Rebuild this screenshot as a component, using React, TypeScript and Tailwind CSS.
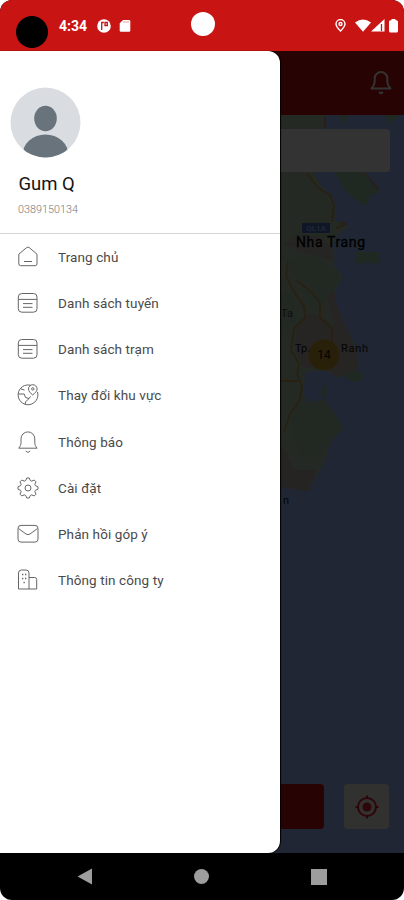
import type { ReactNode } from 'react';

// eight-tooth outline around (11, 11)
const gear = Array.from({ length: 8 }, (_, i) =>
  [[-0.3, 7.8], [-0.12, 10.1], [0.12, 10.1], [0.3, 7.8]]
    .map(([a, r]) => {
      const t = (i * Math.PI) / 4 + a;
      return `${(11 + r * Math.sin(t)).toFixed(2)},${(11 - r * Math.cos(t)).toFixed(2)}`;
    })
    .join(' '),
).join(' ');

const menu: { label: string; icon: ReactNode }[] = [
  {
    label: 'Trang chủ',
    icon: <path d="M1.8 8.2 9.500 1.700q1.400-1.100 2.800 0L20 8.2v9.6q0 1.9-1.9 1.9H3.7q-1.9 0-1.9-1.9zM7 15.500h8" />,
  },
  { label: 'Danh sách tuyến', icon: <ListShape /> },
  { label: 'Danh sách trạm', icon: <ListShape /> },
  {
    label: 'Thay đổi khu vực',
    icon: (
      <>
        <path d="M14 1.400A9.900 9.900 0 1 0 20.500 8" />
        <path d="M15.700 11c-2-1.700-4.200-3.700-4.200-6a4.200 4.200 0 0 1 8.600 0c0 2.300-2.300 4.300-4.400 6z" />
        <circle cx="15.800" cy="4.900" r="1.200" />
        <path d="M1.200 10h6l1.300 3.500 3.500 1-3.500 3.500-.3 2.700M3.500 4.800l4 1.200M12 14.500l1.500-2" />
      </>
    ),
  },
  {
    label: 'Thông báo',
    icon: <path d="M1.700 17.200h18.400c-1.500-1.800-2.300-3.500-2.300-5.500V7.800a6.900 6.900 0 0 0-13.800 0v3.900c0 2-.8 3.700-2.300 5.500zM8.700 20l2.200 1.500 2.200-1.500" />,
  },
  {
    label: 'Cài đặt',
    icon: (
      <>
        <polygon points={gear} strokeLinejoin="round" />
        <circle cx="11" cy="11" r="3" />
      </>
    ),
  },
  {
    label: 'Phản hồi góp ý',
    icon: <path d="M4 2.400h14q3 0 3 3v10.700q0 3-3 3H4q-3 0-3-3V5.400q0-3 3-3zM1.500 5.500 9 11q2 1.300 4 0l7.500-5.500" />,
  },
  {
    label: 'Thông tin công ty',
    icon: (
      <>
        <path d="M1.500 20V4q0-3 3-3h4.500q3 0 3 3v16zM12 8.500h5.700q2 0 2 2V20H12" />
        <path d="M5 5.500h1.300M8 5.500h1.300M5 9.500h1.300M8 9.500h1.300M6.500 13.500h1.300" strokeWidth="1.300" />
      </>
    ),
  },
];

function ListShape() {
  return (
    <>
      <rect x="1.300" y="1.500" width="18.700" height="18.700" rx="3.500" />
      <path d="M1.300 7.400H20M6 11.600h9.500M6 15.300h9.500" />
    </>
  );
}

function StatusBar() {
  return (
    <header className="relative flex h-[51px] shrink-0 items-center bg-[#c91414] text-white">
      <div className="mt-3 ml-4 size-8 rounded-full bg-black" />
      <span className="mt-[2px] ml-[11px] text-[14px] font-bold">4:34</span>
      <svg className="mt-px ml-[10px]" width="14" height="14" viewBox="0 0 14 14">
        <circle cx="7" cy="7" r="6.800" fill="#fff" />
        <path d="M4.700 11V3.500h2.200M8 3.500h2.300v3H8z" fill="none" stroke="#c91414" strokeWidth="1.300" />
      </svg>
      <svg className="mt-px ml-[8px]" width="12" height="14" viewBox="0 0 12 14">
        <path d="M4 1h6q1.300 0 1.300 1.300v9.200q0 1.300-1.300 1.300H2Q.7 12.800.7 11.500V4.300z" fill="#fff" />
        <path d="M5 2.200v1.600M7 2.200v1.600M9 2.200v1.600" stroke="#c91414" strokeWidth=".5" />
      </svg>
      <div className="absolute top-3 left-[191px] size-6 rounded-full bg-white" />
      <div className="mr-[6px] ml-auto flex items-center">
        <svg width="11" height="13" viewBox="0 0 11 13" fill="none" stroke="#fff" strokeWidth="1.400">
          <path d="M5.500 12C3 9.500 1 7.300 1 5.100a4.500 4.500 0 0 1 9 0c0 2.200-2 4.400-4.500 6.900z" />
          <circle cx="5.500" cy="5" r="1.500" />
        </svg>
        <svg className="ml-[9px]" width="16" height="13" viewBox="0 0 16 13">
          <path d="M0 3.500Q8-2.500 16 3.500L8 12.700z" fill="#fff" />
        </svg>
        <svg width="14" height="13" viewBox="0 0 14 13">
          <path d="M0 12.500 13.500 0v12.500z" fill="#fff" />
          <path d="M10.500 5v7" stroke="#c91414" strokeWidth="1.300" />
        </svg>
        <svg className="ml-[4px]" width="9" height="14" viewBox="0 0 9 14">
          <path d="M2.500 1.200V0h4v1.200h1q1.500 0 1.500 1.500v9.300q0 1.500-1.500 1.500h-6Q0 13.500 0 12V2.700q0-1.500 1.500-1.500z" fill="#fff" />
        </svg>
      </div>
    </header>
  );
}

function MapView() {
  return (
    <svg className="ml-auto h-[738px] w-[126px]" viewBox="278 115 126 738" fontFamily="Roboto, sans-serif">
      <rect x="278" y="115" width="126" height="738" fill="#a0beff" />
      {/* mainland */}
      <path d="M278 115H326L322 130 322 170 314 174 324 189 333 197 336 211 334 221 342 222 348 227 337 236 332 246 335 256 334 266 343 277 337 287 334 300 342 318 350 335 357 350 359 365 355 374 337 378 325 370 306 372 303 392 306 402 325 400 338 418 343 428 331 442 325 462 318 474 308 491 278 487z" fill="#b2ccb6" />
      {/* built-up and bare ground */}
      <path d="M282 243L304 234 322 238 331 246 333 262 320 256 300 252zM327 297L334 290 336 302 342 318 357 350 358 366 352 374 337 377 325 368 304 368 296 352 297 325 308 314 322 316 335 328z" fill="#bdb8ae" />
      <path d="M278 442L286 452 294 470 318 470 308 491 278 487z" fill="#b9b6ae" />
      <path d="M298 404L324 401 338 418 343 428 331 440 322 456 302 458 294 440 290 420z" fill="#a5caab" />
      <path d="M278 292L292 292 296 320 282 336H278zM288 258L316 256 340 276 334 288 322 294 298 282zM302 290H327L324 306 310 304z" fill="#a5caab" />
      {/* islands */}
      <path d="M335 172H362L370 183 380 192 370 196 365 206 357 200 346 192zM356 252H380V263H356zM345 374L357 370 365 376 358 382 348 380zM322 390L327 382 326 396 322 400zM340 115H349L341 126zM386 115H400L388 124z" fill="#9ccaa6" />
      <path d="M308 174L318 188 330 195 334 205 332 222M364 173L372 182 379 190M325 116V128M340 222L346 224 336 228M288 262L286 276 294 292 304 306 305 318 294 328 291 350 299 364 297 374 302 386 300 400 290 414 284 432M281 381H298M296 280L311 292 320 302V318L332 328V346" fill="none" stroke="#c9a45a" strokeWidth="1.800" strokeLinejoin="round" />
      <path d="M282 242l20-2 8 4M303 404l18-1 12 16 6 8M334 436l-9 12-7 24" fill="none" stroke="#c4c4bc" strokeWidth="1" />
      <rect x="302" y="223" width="28" height="10" fill="#4670c8" />
      <text x="316" y="231" textAnchor="middle" fontSize="8" fontWeight="500" fill="#b8c8e8">QL1A</text>
      <text x="296" y="247" fontSize="14" textLength="69" stroke="#000" strokeWidth=".3">Nha Trang</text>
      <text x="281" y="317" fontSize="11" fill="#444">Ta</text>
      <text x="295" y="352" fontSize="11" fill="#111">Tp.</text>
      <text x="341" y="352" fontSize="11" fill="#111" textLength="27">Ranh</text>
      <circle cx="324" cy="355" r="15.500" fill="#c99f30" />
      <text x="324" y="359" textAnchor="middle" fontSize="12" fill="#111">14</text>
      <text x="283" y="504" fontSize="11" fill="#222">n</text>
    </svg>
  );
}

function MapScreen() {
  return (
    <div className="flex h-full flex-col">
      <div className="flex h-16 items-center justify-end bg-[#c81010] pr-[11px]">
        <svg width="24" height="26" viewBox="0 0 24 26" fill="none" stroke="#fff" strokeWidth="2" strokeLinejoin="round">
          <path d="M2.500 18.500h19c-2.200-2.300-3.200-4.200-3.200-7V8.300a6.300 6.300 0 0 0-12.600 0v3.200c0 2.800-1 4.700-3.200 7zM10 22l2 1.300L14 22" />
        </svg>
      </div>
      <div className="relative flex grow bg-[#a0beff]">
        <MapView />
        <div className="absolute top-[14px] right-[14px] left-[14px] h-[43px] rounded bg-white" />
        <div className="absolute right-[15px] bottom-6 left-[15px] flex h-[45px] gap-[20px]">
          <div className="grow rounded bg-[#c81010]" />
          <div className="flex w-[45px] items-center justify-center rounded bg-[#f4f4f0]">
            <svg width="24" height="24" viewBox="0 0 24 24" fill="none" stroke="#e31c30" strokeWidth="2">
              <circle cx="12" cy="12" r="9" />
              <circle cx="12" cy="12" r="4.500" fill="#e31c30" stroke="none" />
              <path d="M12 .5V4M12 20v3.500M.5 12H4M20 12h3.500" />
            </svg>
          </div>
        </div>
      </div>
    </div>
  );
}

function Drawer() {
  return (
    <aside className="absolute inset-y-0 left-0 w-[280px] rounded-r-xl bg-white shadow-[1px_0_1px_#000]">
      <div className="flex h-[183px] flex-col border-b border-[#d5d5d5] pt-[36px]">
        <svg className="ml-[10px] shrink-0" width="71" height="71" viewBox="0 0 71 71">
          <clipPath id="avatar">
            <circle cx="35.500" cy="35.500" r="35" />
          </clipPath>
          <g clipPath="url(#avatar)">
            <rect width="71" height="71" fill="#d9dde2" />
            <ellipse cx="35.500" cy="31.500" rx="11.300" ry="12.700" fill="#69737c" />
            <ellipse cx="35.500" cy="68" rx="23" ry="20.500" fill="#69737c" />
          </g>
        </svg>
        <h1 className="mt-[13px] ml-[18.500px] text-[18.500px] leading-[26px] text-[#151515]">Gum Q</h1>
        <p className="mt-[6px] ml-[18px] text-[10.800px] leading-[14px] font-light text-[#777]">0389150134</p>
      </div>
      <nav className="flex flex-col">
        {menu.map((item) => (
          <a key={item.label} className="flex h-[46.150px] items-center pl-[17px]">
            <svg width="22" height="22" viewBox="0 0 22 22" fill="none" stroke="#666" strokeWidth="1">
              {item.icon}
            </svg>
            <span className="ml-[19px] text-[13.500px] tracking-[0.100px] text-[#4a4a4a]">{item.label}</span>
          </a>
        ))}
      </nav>
    </aside>
  );
}

export default function App() {
  return (
    <div className="h-[900px] w-[404px] bg-white">
      <div className="flex h-full flex-col overflow-hidden rounded-xl bg-black font-['Roboto',sans-serif]">
        <StatusBar />
        <main className="relative h-[802px] shrink-0">
          <MapScreen />
          <div className="absolute inset-0 bg-black/80" />
          <Drawer />
        </main>
        <footer className="grid grow grid-cols-3 items-center px-[26px]">
          <svg className="mx-auto" width="16" height="17" viewBox="0 0 16 17">
            <path d="M.5 8.500 15 .5v16z" fill="#9d9d9d" />
          </svg>
          <div className="mx-auto size-[15px] rounded-full bg-[#9d9d9d]" />
          <div className="mx-auto size-4 bg-[#9d9d9d]" />
        </footer>
      </div>
    </div>
  );
}
